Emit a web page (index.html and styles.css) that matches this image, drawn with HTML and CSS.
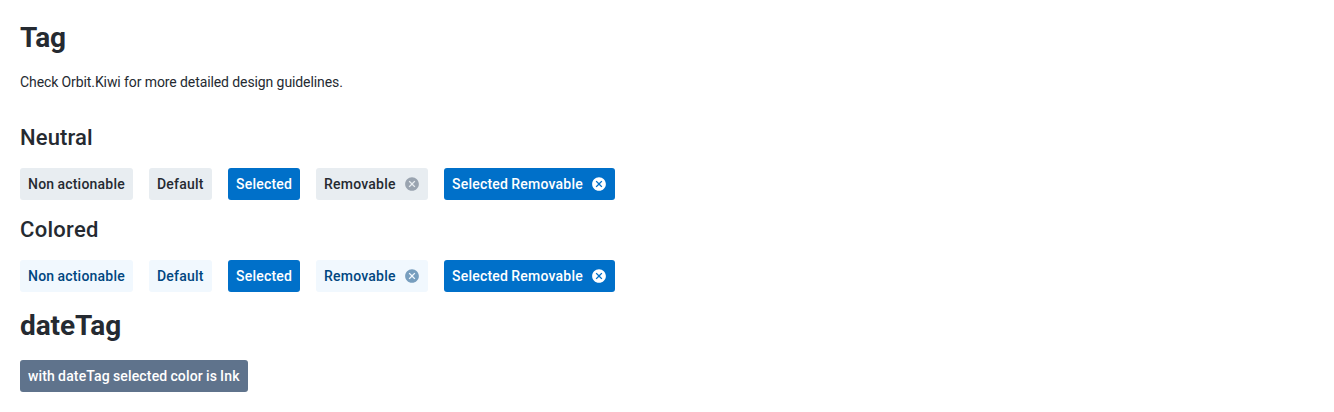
FILE: index.html
```html
<!DOCTYPE html>
<html lang="en">
<head>
<meta charset="utf-8">
<title>Tag</title>
<link rel="stylesheet" href="styles.css">
</head>
<body>
<svg width="0" height="0" class="defs"><symbol id="close" viewBox="0 0 24 24"><path d="M12 1.700C6.300 1.700 1.700 6.300 1.700 12S6.300 22.300 12 22.300 22.300 17.700 22.300 12 17.700 1.700 12 1.700zm5 13.890L15.590 17 12 13.410 8.410 17 7 15.590 10.590 12 7 8.410 8.410 7 12 10.590 15.590 7 17 8.410 13.410 12z"/></symbol></svg>
<main class="page">
<h1 class="title">Tag</h1>
<p class="lead">Check Orbit.Kiwi for more detailed design guidelines.</p>
<h2 class="subtitle">Neutral</h2>
<div class="row">
<span class="tag tag-static">Non actionable</span>
<span class="tag tag-default">Default</span>
<span class="tag tag-selected selected">Selected</span>
<span class="tag tag-removable">Removable<svg class="icon"><use href="#close"/></svg></span>
<span class="tag tag-both selected">Selected Removable<svg class="icon"><use href="#close"/></svg></span>
</div>
<h2 class="subtitle subtitle-wide">Colored</h2>
<div class="row">
<span class="tag tag-static colored">Non actionable</span>
<span class="tag tag-default colored">Default</span>
<span class="tag tag-selected selected">Selected</span>
<span class="tag tag-removable colored">Removable<svg class="icon"><use href="#close"/></svg></span>
<span class="tag tag-both selected">Selected Removable<svg class="icon"><use href="#close"/></svg></span>
</div>
<h1 class="title">dateTag</h1>
<div class="row">
<span class="tag ink">with dateTag selected color is Ink</span>
</div>
</main>
</body>
</html>
```
FILE: styles.css
```css
body {
  margin: 0;
  background: #fff;
  color: #252a31;
  font-family: Roboto, sans-serif;
}
.defs {
  position: absolute;
}
.page {
  display: flex;
  flex-direction: column;
  gap: 16px;
  padding: 20px;
}
.title {
  margin: 0;
  font-size: 28px;
  font-weight: 700;
  line-height: 36px;
  letter-spacing: -0.08px;
}
.lead {
  margin: 0 0 16px;
  font-size: 14px;
  line-height: 20px;
  letter-spacing: -0.095px;
}
.subtitle {
  margin: 0;
  font-size: 22px;
  font-weight: 500;
  line-height: 28px;
  letter-spacing: 0.15px;
}
.subtitle-wide {
  letter-spacing: 0.28px;
}
.row {
  display: flex;
  gap: 16px;
}
.tag {
  display: flex;
  align-items: center;
  box-sizing: border-box;
  height: 32px;
  padding: 0 8px;
  border-radius: 3px;
  background: #e8edf1;
  font-size: 14px;
  font-weight: 500;
  line-height: 16px;
  letter-spacing: 0.22px;
  word-spacing: -0.6px;
  white-space: nowrap;
}
.tag-static {
  width: 113px;
}
.tag-default {
  width: 63px;
}
.tag-selected {
  width: 72px;
}
.tag-removable {
  width: 112px;
}
.tag-both {
  width: 171px;
}
.icon {
  flex: none;
  width: 16px;
  height: 16px;
  margin-left: auto;
  fill: #4f5e71;
  opacity: 0.5;
}
.colored {
  background: #f1f8fe;
  color: #004680;
}
.colored .icon {
  fill: #004680;
}
.selected {
  background: #0070c9;
  color: #fff;
}
.selected .icon {
  fill: #fff;
  opacity: 1;
}
.ink {
  width: 228px;
  background: #5f738c;
  color: #fff;
  letter-spacing: 0.16px;
}
```
